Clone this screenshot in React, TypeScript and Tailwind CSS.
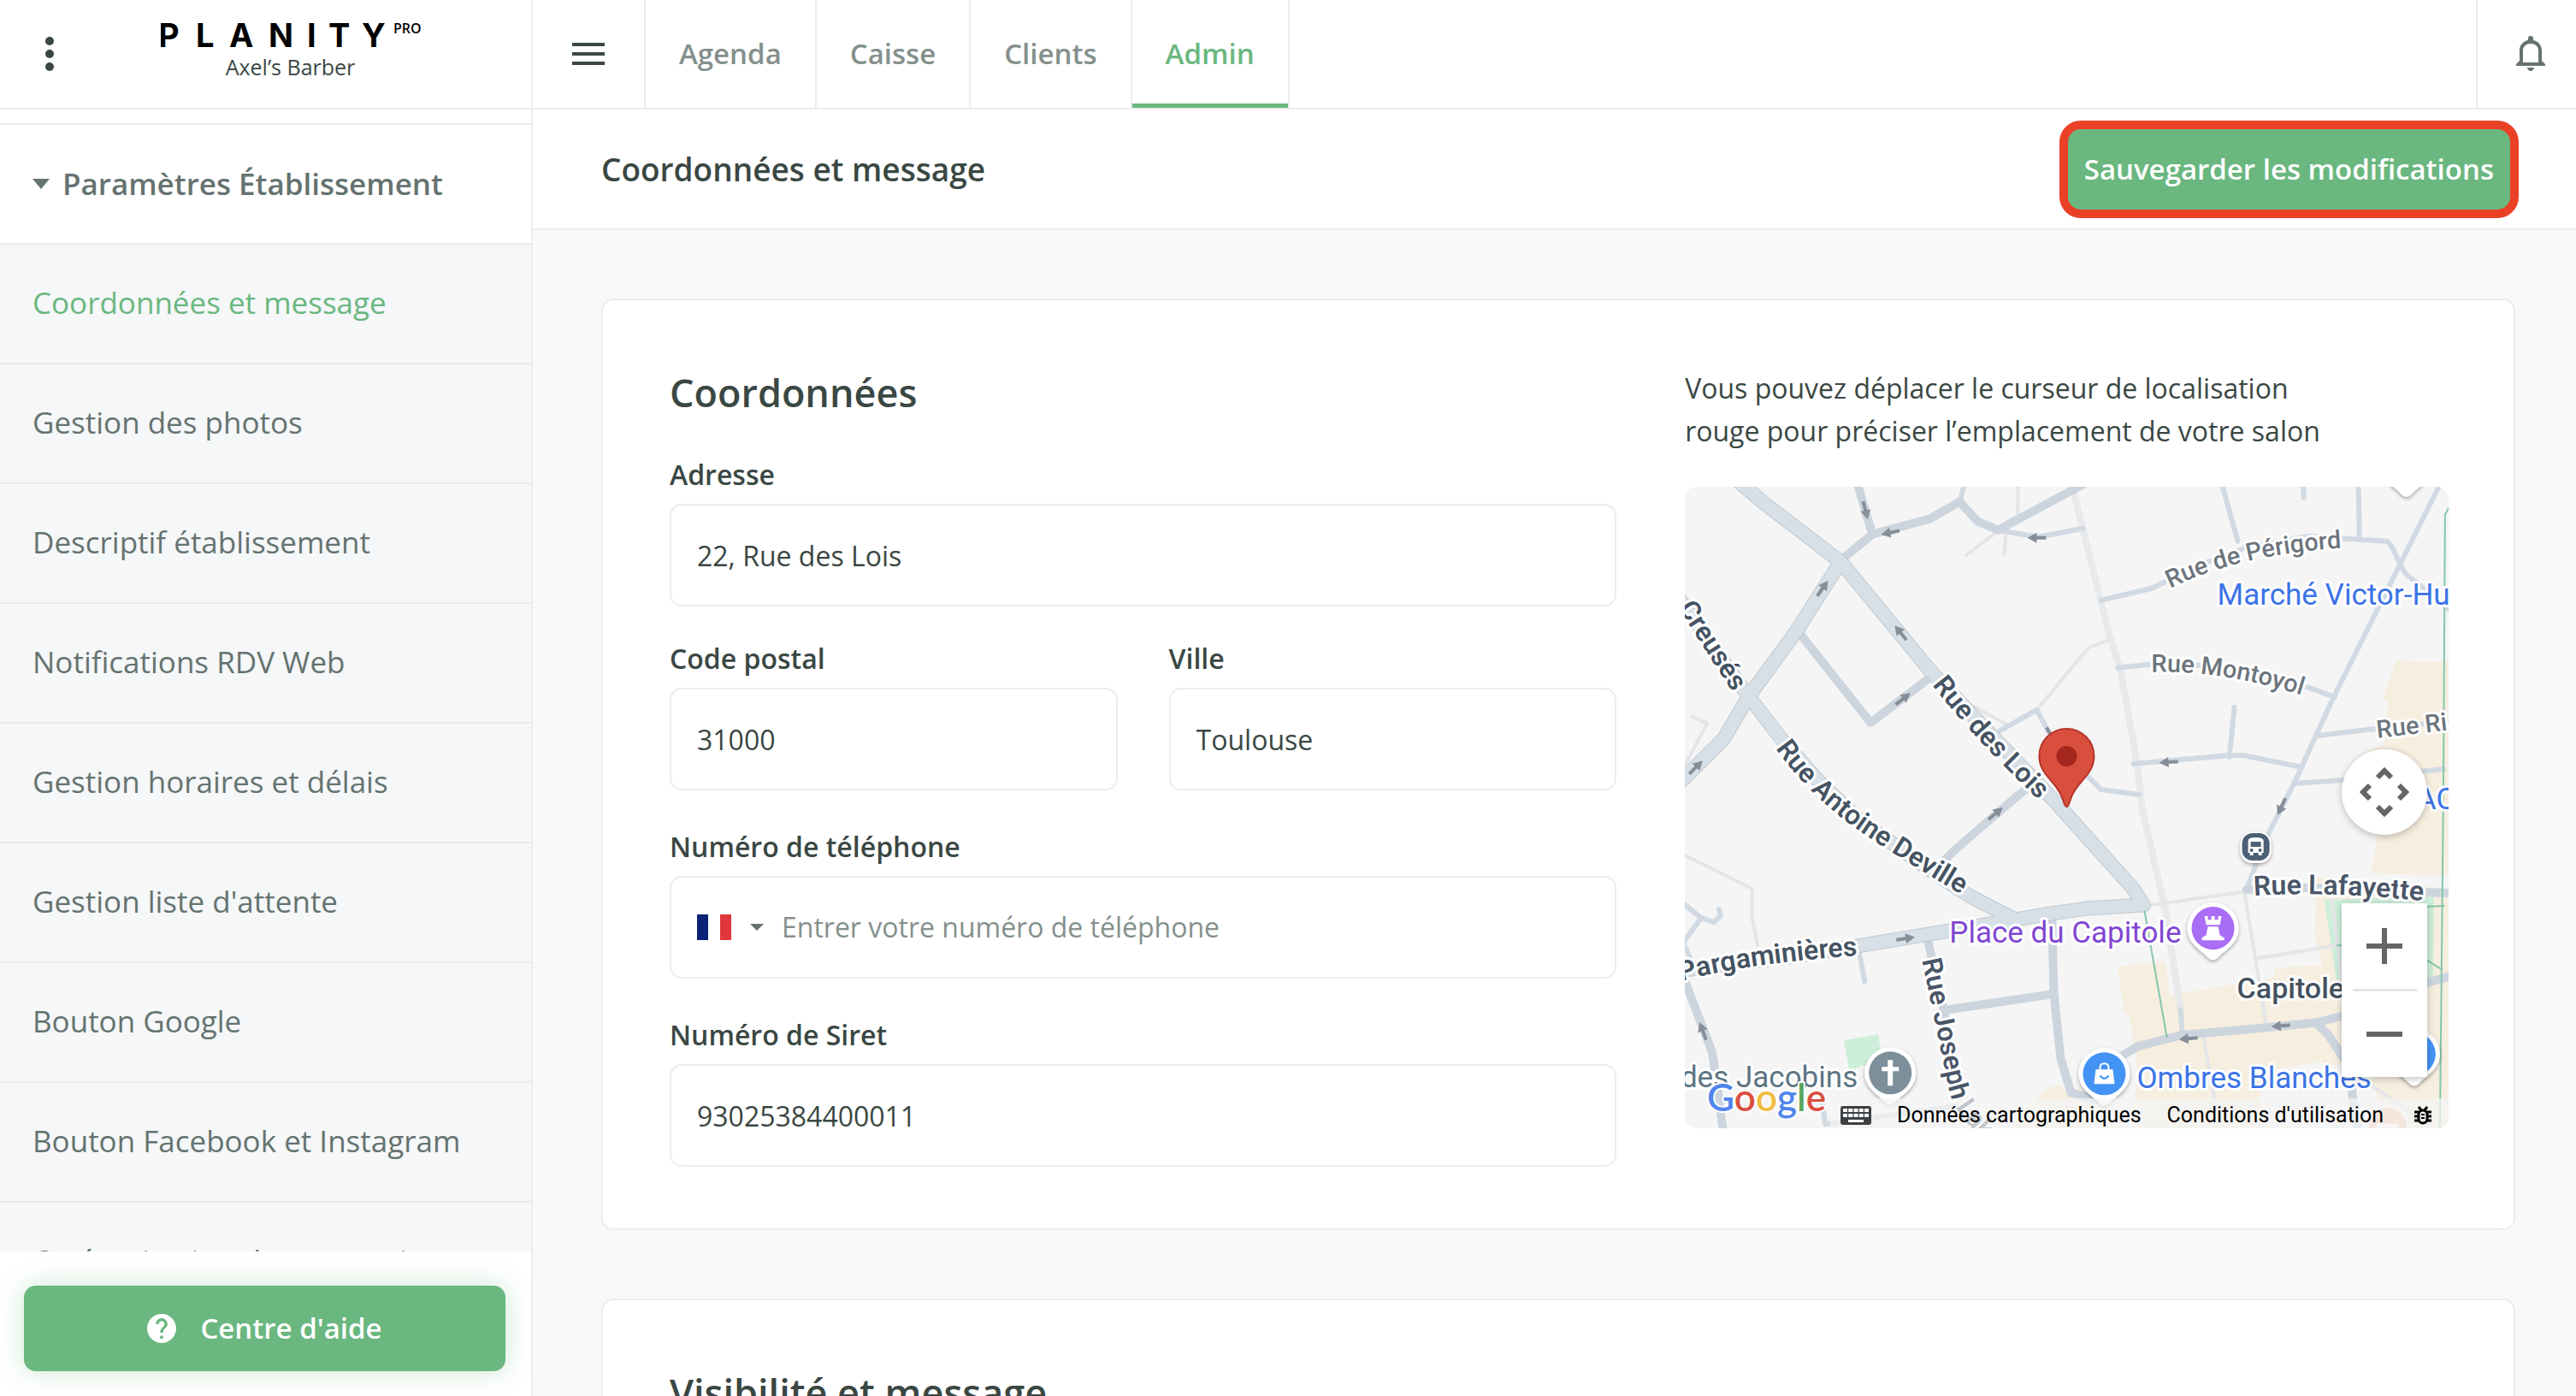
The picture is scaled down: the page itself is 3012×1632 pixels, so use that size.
import { useState } from "react";
import { twMerge } from "tailwind-merge";

// --- PROPS ---
type FieldProps = {
  id: string;
  label: string;
  value: string;
  onChange: (value: string) => void;
  className?: string;
};

type PoiProps = {
  x: number;
  y: number;
  color: string;
  children?: React.ReactNode;
};

// --- DATA ---
const TABS = ["Agenda", "Caisse", "Clients", "Admin"];

const MENU = [
  "Coordonnées et message",
  "Gestion des photos",
  "Descriptif établissement",
  "Notifications RDV Web",
  "Gestion horaires et délais",
  "Gestion liste d'attente",
  "Bouton Google",
  "Bouton Facebook et Instagram",
  "Catégorisation des prestations",
];

const MAJOR_ROADS = [
  "M60 -8 L92 19 L182 88 L289 218 L436 372 L524 470 L536 489 L469 493 L426 499 L386 506 L206 536 L136 548 L-10 566",
  "M-20 112 L69 238 L92 268 L112 294 L156 344 L202 388 L286 448 L332 478 L386 506",
  "M182 88 L129 171 L74 246 L46 294 L-10 350",
];

const ROADS = [
  "M201 -5 L219 56 L184 85",
  "M219 56 L286 38 L321 18 L342 41 L366 51 L470 -5",
  "M132 169 L217 276 L288 222",
  "M412 344 L389 361 L316 424 L294 446",
  "M-2 572 L32 661 L37 694 L45 755",
  "M284 531 L302 610 L318 690",
  "M302 612 L429 593",
  "M429 508 L431 591 L439 668 L451 708 L480 716",
  "M509 666 L529 654 L579 641 L669 633 L739 626 L769 618 L869 579 L895 572",
  "M739 628 L752 641 L776 678 L782 728 L788 755",
  "M656 471 L700 468 L895 475",
];

const LANES = [
  "M366 51 L412 59 L429 56 L465 49",
  "M321 18 L327 -4",
  "M367 286 L411 261 L431 298 L471 339 L486 354 L531 360",
  "M-2 487 L19 504 L34 509 L42 501 L40 494",
  "M19 504 L-2 533 L6 550",
  "M204 545 L210 578",
  "M883 -4 L757 248 L712 346 L679 411 L656 471",
  "M627 -4 L646 64",
  "M722 -4 L723 13",
  "M787 3 L788 61",
  "M486 133 L546 119 L562 111 L612 88 L656 71 L729 58 L771 61 L821 64 L826 71 L841 101 L895 146",
  "M506 212 L542 208 L602 209 L729 235 L759 246",
  "M524 324 L636 314 L652 314 L721 328",
  "M642 258 L636 316",
  "M712 347 L769 343 L886 330",
  "M739 291 L806 283 L895 274",
  "M579 611 L581 638",
  "M160 715 L164 745 L330 722",
];

const FOOTPATHS = [
  "M389 -2 V34",
  "M361 56 L329 80",
  "M375 58 L373 80",
  "M494 180 L472 188 L411 261",
  "M376 278 L336 256",
  "M9 269 L26 277 L0 326",
  "M-2 430 L79 470 L78 501 L85 536",
  "M544 489 L656 473",
  "M654 476 L679 628",
  "M669 551 L762 536",
  "M756 483 L767 574",
  "M606 644 L621 728",
  "M804 701 L870 745",
];

const GREENWAYS = [
  "M893 24 L888 33 L886 364 L884 561 L882 752",
  "M537 496 L563 643",
  "M866 553 L884 564",
  "M866 491 L887 490",
  "M762 536 H770",
];

const BUILT_AREAS = [
  "831,204 886,205 892,205 892,470 737,456 736,528 746,559 689,562 688,574 567,594 561,554 505,561 514,616 519,616 529,681 522,750 672,750 672,684 740,672 742,668 746,676 776,676 800,690 812,720 822,750 892,750 892,455 811,452 802,451 809,411 801,306 817,303 820,264 822,250 815,249",
  "420,706 436,698 450,712 462,700 480,720 470,750 376,750",
];

// x, y, heading in degrees
const ARROWS = [
  [211, 28, 76],
  [240, 54, 168],
  [411, 60, 180],
  [161, 119, -55],
  [252, 171, -129],
  [255, 248, -38],
  [13, 328, -45],
  [428, 291, 60],
  [565, 322, 176],
  [697, 374, 115],
  [258, 528, -8],
  [363, 382, -40],
  [21, 636, -110],
  [588, 645, 175],
  [696, 630, 175],
];

const MAIN_STREET_LABELS = [
  { id: "creuses", d: "M-8 142 L66 256", text: "Creusés", color: "#455362" },
  { id: "lois", d: "M289 232 Q345 305 450 400", text: "Rue des Lois", color: "#455362" },
  {
    id: "deville",
    d: "M106 306 Q150 368 218 412 T370 504",
    text: "Rue Antoine Deville",
    color: "#455362",
  },
  { id: "parga", d: "M-4 578 Q70 556 240 545", text: "Pargaminières", color: "#455362" },
  {
    id: "joseph",
    d: "M277 553 L309 706 Q316 740 380 790",
    text: "Rue Joseph Lakanal",
    color: "#4a5668",
  },
  { id: "lafayette", d: "M665 478 Q760 472 890 487", text: "Rue Lafayette", color: "#4a5668" },
];

const STREET_LABELS = [
  { id: "perigord", d: "M567 119 Q660 74 795 71", text: "Rue de Périgord", color: "#6c757d" },
  { id: "montoyol", d: "M545 217 Q640 214 750 254", text: "Rue Montoyol", color: "#6c757d" },
  { id: "rivals", d: "M809 294 L940 279", text: "Rue Ri", color: "#6c757d" },
];

const Field = (props: FieldProps) => (
  <div className={twMerge("flex flex-col gap-3", props.className)}>
    <label htmlFor={props.id} className="text-[32px] leading-11 font-semibold">
      {props.label}
    </label>
    <input
      id={props.id}
      value={props.value}
      onChange={(e) => props.onChange(e.target.value)}
      className="h-[120px] w-full rounded-[14px] border-2 border-[#ededed] px-[30px] text-[32px]"
    />
  </div>
);

const Poi = ({ x, y, color, children }: PoiProps) => (
  <g transform={`translate(${x} ${y})`}>
    <path
      d="M0 37 C-3 37 -5 35 -7 33 C-13 26 -30 18 -30 0 A30 30 0 0 1 30 0 C30 18 13 26 7 33 C5 35 3 37 0 37 Z"
      fill="#fff"
      filter="url(#poi-shadow)"
    />
    <circle r="25" fill={color} />
    {children}
  </g>
);

const MapCanvas = () => (
  <svg
    viewBox="0 0 892 750"
    preserveAspectRatio="xMidYMid slice"
    className="block size-full"
    style={{ fontFamily: "Roboto, sans-serif" }}
    role="img"
    aria-label="Plan du quartier"
  >
    <defs>
      <filter id="poi-shadow" x="-30%" y="-30%" width="160%" height="170%">
        <feDropShadow dx="0" dy="2" stdDeviation="2" floodOpacity="0.35" />
      </filter>
      {[...MAIN_STREET_LABELS, ...STREET_LABELS].map((label) => (
        <path key={label.id} id={label.id} d={label.d} />
      ))}
    </defs>
    <rect width="892" height="750" fill="#f5f5f5" />

    {BUILT_AREAS.map((points) => (
      <polygon key={points} points={points} fill="#f6eedf" />
    ))}
    <polygon points="747,483 875,479 874,574 761,576" fill="#cdeeda" />
    <polygon points="186,647 226,640 230,668 192,683" fill="#cdeeda" />

    <g fill="none" strokeLinejoin="round" strokeLinecap="round">
      <path
        d="M454 6 L496 174 L509 214 L529 328 L534 375 L562 498 L579 611"
        stroke="#e8e9eb"
        strokeWidth="8"
        strokeLinecap="butt"
      />
      <g stroke="#e4e5e8" strokeWidth="4">
        {FOOTPATHS.map((d) => (
          <path key={d} d={d} />
        ))}
      </g>
      <g stroke="#d1dae3" strokeWidth="6">
        {LANES.map((d) => (
          <path key={d} d={d} />
        ))}
      </g>
      <g stroke="#ccd5de" strokeWidth="10">
        {ROADS.map((d) => (
          <path key={d} d={d} />
        ))}
      </g>
      <g stroke="#bfc9d1" strokeWidth="17">
        {MAJOR_ROADS.map((d) => (
          <path key={d} d={d} />
        ))}
      </g>
      <g stroke="#d8e0e7" strokeWidth="15">
        {MAJOR_ROADS.map((d) => (
          <path key={d} d={d} />
        ))}
      </g>
      <g stroke="#84c6ab" strokeWidth="2">
        {GREENWAYS.map((d) => (
          <path key={d} d={d} />
        ))}
      </g>
    </g>

    {ARROWS.map(([x, y, angle]) => (
      <path
        key={`${x}-${y}`}
        d="M-11 -2 H0 V-6 L11 0 L0 6 V2 H-11 Z"
        fill="#858e99"
        transform={`translate(${x} ${y}) rotate(${angle})`}
      />
    ))}

    <g strokeLinejoin="round" stroke="#fff" strokeWidth="6" style={{ paintOrder: "stroke" }}>
      <g fontSize="32" fontWeight="600">
        {MAIN_STREET_LABELS.map((label) => (
          <text key={label.id} fill={label.color}>
            <textPath href={`#${label.id}`}>{label.text}</textPath>
          </text>
        ))}
      </g>
      <g fontSize="29" fontWeight="500">
        {STREET_LABELS.map((label) => (
          <text key={label.id} fill={label.color}>
            <textPath href={`#${label.id}`}>{label.text}</textPath>
          </text>
        ))}
      </g>
      <g fontSize="35">
        <text x="622" y="138" fill="#3b73e6">
          Marché Victor-Hugo
        </text>
        <text x="855" y="377" fill="#3b73e6">
          AC
        </text>
        <text x="309" y="533" fill="#8046d1">
          Place du Capitole
        </text>
        <text x="528" y="703" fill="#3b73e6">
          Ombres Blanches
        </text>
        <text x="202" y="702" fill="#5d7482" textAnchor="end">
          des Jacobins
        </text>
      </g>
      <text x="645" y="598" fontSize="34" fontWeight="500" fill="#44525f">
        Capitole
      </text>
    </g>

    {/* bus stop */}
    <g transform="translate(667 421)">
      <rect x="-18" y="-18" width="36" height="37" rx="14" fill="#fff" filter="url(#poi-shadow)" />
      <rect x="-16" y="-16" width="32" height="32" rx="12" fill="#4d6075" />
      <path
        d="M-9 -7 Q-9 -11 0 -11 Q9 -11 9 -7 V7 H7 V10 H3 V7 H-3 V10 H-7 V7 H-9 Z"
        fill="#fff"
      />
      <rect x="-6" y="-6" width="12" height="6" fill="#4d6075" />
      <circle cx="-5" cy="4" r="2" fill="#4d6075" />
      <circle cx="5" cy="4" r="2" fill="#4d6075" />
    </g>

    <Poi x={843} y={-25} color="#4393f5" />
    <Poi x={852} y={663} color="#4393f5" />
    <Poi x={240} y={685} color="#7c8f9b">
      <path d="M-3 -15 H3 V-7 H10 V-2 H3 V15 H-3 V-2 H-10 V-7 H-3 Z" fill="#fff" />
    </Poi>
    <Poi x={617} y={516} color="#a96ef5">
      <path
        d="M-10 -14 H-6 V-10 H-2 V-14 H2 V-10 H6 V-14 H10 L8 -4 H-8 Z M-6 -2 H6 L8 8 L13 11 V14 H-13 V11 L-8 8 Z"
        fill="#fff"
      />
    </Poi>
    <Poi x={490} y={686} color="#4393f5">
      <path d="M-10 -5 H10 L12 12 H-12 Z" fill="#fff" />
      <path d="M-5 -4 V-7 Q-5 -12 0 -12 Q5 -12 5 -7 V-4" fill="none" stroke="#fff" strokeWidth="2" />
      <path d="M-5 2 Q0 9 5 2" fill="none" stroke="#4393f5" strokeWidth="2" />
    </Poi>

    {/* draggable salon marker */}
    <path
      d="M446 374 C444 374 443 370 442 367 C436 345 414 338 414 315 A32 32 0 0 1 478 315 C478 338 456 345 450 367 C449 370 448 374 446 374 Z"
      fill="#d94f3e"
      stroke="#b8332a"
      strokeWidth="2"
    />
    <circle cx="446" cy="315" r="12" fill="#a4261d" />

    <g opacity="0.45">
      <circle cx="821" cy="748" r="24" fill="#f08a50" stroke="#fff" strokeWidth="4" />
      <rect x="808" y="744" width="26" height="8" fill="#fff" />
    </g>
  </svg>
);

const GoogleLogo = () => (
  <svg viewBox="0 0 146 52" className="h-[52px] w-[146px]" aria-label="Google">
    <text
      x="2"
      y="38"
      fontSize="44"
      fontWeight="600"
      stroke="#fff"
      strokeWidth="4"
      strokeLinejoin="round"
      style={{ fontFamily: "Lato, sans-serif", paintOrder: "stroke" }}
    >
      <tspan fill="#5086ec">G</tspan>
      <tspan fill="#d9503f">o</tspan>
      <tspan fill="#f1bd42">o</tspan>
      <tspan fill="#5086ec">g</tspan>
      <tspan fill="#58a65c">l</tspan>
      <tspan fill="#d9503f">e</tspan>
    </text>
  </svg>
);

const MapView = () => (
  <div className="relative h-[750px] overflow-hidden rounded-[14px] font-[Roboto,sans-serif]">
    <MapCanvas />

    <div className="absolute right-[25px] bottom-[60px] flex flex-col gap-20 text-[#666]">
      <button
        type="button"
        aria-label="Déplacer la carte"
        className="flex size-[100px] items-center justify-center rounded-full bg-white shadow-[0_2px_8px_rgba(0,0,0,0.25)]"
      >
        <svg viewBox="0 0 60 60" className="size-[60px]" fill="none" stroke="currentColor" strokeWidth="6">
          <path d="M22 13 L30 5 L38 13 M22 47 L30 55 L38 47 M13 22 L5 30 L13 38 M47 22 L55 30 L47 38" />
        </svg>
      </button>
      <div className="flex flex-col items-center bg-white shadow-[0_2px_8px_rgba(0,0,0,0.25)]">
        <button type="button" aria-label="Zoom avant" className="flex size-[100px] items-center justify-center">
          <svg viewBox="0 0 42 42" className="size-[42px]" stroke="currentColor" strokeWidth="6">
            <path d="M0 21 H42 M21 0 V42" />
          </svg>
        </button>
        <div className="h-[3px] w-[75px] bg-[#e6e6e6]" />
        <button type="button" aria-label="Zoom arrière" className="flex size-[100px] items-center justify-center">
          <svg viewBox="0 0 42 42" className="size-[42px]" stroke="currentColor" strokeWidth="6">
            <path d="M0 21 H42" />
          </svg>
        </button>
      </div>
    </div>

    <a href="#google" className="absolute bottom-[6px] left-6">
      <GoogleLogo />
    </a>

    <div className="absolute right-0 bottom-0 flex h-[35px] items-center bg-[#f5f5f5]/70 pt-1 pr-5 pl-3 text-[25px] text-black">
      <button type="button" aria-label="Raccourcis clavier" className="mr-[30px]">
        <svg viewBox="0 0 36 22" className="h-[22px] w-9">
          <rect width="36" height="22" rx="3" fill="#3c4043" />
          <path
            d="M3 5 H33 M3 11 H33"
            stroke="#fff"
            strokeWidth="4"
            strokeDasharray="5 1.25"
          />
          <rect x="9" y="16" width="18" height="3" fill="#fff" />
        </svg>
      </button>
      <button type="button" className="mr-[30px]">
        Données cartographiques
      </button>
      <a href="#conditions" className="mr-9">
        Conditions d'utilisation
      </a>
      <button type="button" aria-label="Signaler une erreur cartographique">
        <svg viewBox="0 0 20 22" className="h-[22px] w-5" fill="none" stroke="currentColor" strokeWidth="3">
          <path d="M5 1 L8 5 M15 1 L12 5 M0 7 H5 M0 12 H5 M0 17 H5 M15 7 H20 M15 12 H20 M15 17 H20" />
          <path d="M8 10 H12 M8 14 H12" strokeWidth="2" />
          <rect x="5" y="5" width="10" height="15" rx="5" />
        </svg>
      </button>
    </div>
  </div>
);

const Sidebar = () => (
  <aside className="flex w-[623px] shrink-0 flex-col border-r-2 border-[#ededed] bg-white">
    <div className="flex h-32 shrink-0 items-center border-b-2 border-[#ededed]">
      <button type="button" aria-label="Plus d'options" className="flex w-[116px] justify-center">
        <svg viewBox="0 0 10 40" className="h-10 w-[10px]" fill="#3a4743">
          <circle cx="5" cy="5" r="5" />
          <circle cx="5" cy="20" r="5" />
          <circle cx="5" cy="35" r="5" />
        </svg>
      </button>
      <div className="flex flex-1 flex-col items-center pr-[58px] pb-3">
        <svg viewBox="0 0 304 40" className="h-10 w-[304px]" aria-label="Planity Pro">
          <text
            x="-3 41 80 126 171 196 235"
            y="35"
            fontSize="38"
            fontWeight="700"
            style={{ fontFamily: "Inter, sans-serif" }}
          >
            PLANITY
          </text>
          <text x="272" y="19" fontSize="16" fontWeight="600" style={{ fontFamily: '"Open Sans", sans-serif' }}>
            PRO
          </text>
        </svg>
        <p className="mt-0.5 text-[25px] leading-8">Axel’s Barber</p>
      </div>
    </div>

    <nav className="min-h-0 flex-1 overflow-hidden pt-4 text-[#65736f]">
      <button
        type="button"
        className="flex h-[140px] w-full items-center gap-[15px] border-t-2 border-[#e9eaeb] pl-[38px] text-[35px] font-semibold"
      >
        <svg viewBox="0 0 20 12" className="h-3 w-5" fill="currentColor">
          <path d="M0 0 H20 L10 12 Z" />
        </svg>
        Paramètres Établissement
      </button>
      <ul className="bg-[#f5f7f9]">
        {MENU.map((item, i) => (
          <li key={item} className="border-t-2 border-[#e9eaeb]">
            <a
              href="#menu"
              className={twMerge(
                "flex h-[138px] items-center px-[38px] pb-0.5 text-[35px]",
                i === 0 && "text-[#6ab77f]"
              )}
            >
              {item}
            </a>
          </li>
        ))}
      </ul>
    </nav>

    <div className="shrink-0 pt-10 pr-[30px] pb-[29px] pl-7">
      <button
        type="button"
        className="flex h-[100px] w-full items-center justify-center gap-7 rounded-[14px] bg-[#6ab77f] text-[33px] font-semibold text-white shadow-[0_0_30px_rgba(106,183,127,0.35)]"
      >
        <svg viewBox="2 2 20 20" className="size-[34px]" fill="currentColor">
          <path d="M12 2C6.48 2 2 6.48 2 12s4.48 10 10 10 10-4.48 10-10S17.52 2 12 2zm1 17h-2v-2h2v2zm2.07-7.75l-.9.92C13.45 12.9 13 13.5 13 15h-2v-.5c0-1.1.45-2.1 1.17-2.83l1.24-1.26c.37-.36.59-.86.59-1.41 0-1.1-.9-2-2-2s-2 .9-2 2H8c0-2.21 1.79-4 4-4s4 1.79 4 4c0 .88-.36 1.68-.93 2.25z" />
        </svg>
        Centre d'aide
      </button>
    </div>
  </aside>
);

const TopBar = () => (
  <header className="flex h-32 shrink-0 border-b-2 border-[#ededed] bg-white">
    <button
      type="button"
      aria-label="Menu"
      className="flex w-[132px] items-center justify-center border-r-2 border-[#ededed]"
    >
      <svg viewBox="0 0 38 26" className="h-[26px] w-[38px]" stroke="#3a4743" strokeWidth="4">
        <path d="M0 2 H38 M0 13 H38 M0 24 H38" />
      </svg>
    </button>
    <nav className="flex">
      {TABS.map((tab) => (
        <a
          key={tab}
          href="#tab"
          className={twMerge(
            "flex items-center border-r-2 border-[#ededed] px-[39px] text-[33px] font-semibold text-[#85908c]",
            tab === "Admin" && "text-[#6ab77f] shadow-[inset_0_-5px_0_#6ab77f]"
          )}
        >
          {tab}
        </a>
      ))}
    </nav>
    <button
      type="button"
      aria-label="Notifications"
      className="ml-auto flex w-[117px] items-center justify-center border-l-2 border-[#ededed] pl-2"
    >
      <svg viewBox="0 0 34 42" className="h-[42px] w-[34px]" fill="#65736f">
        <path
          fillRule="evenodd"
          d="M17 0 C19 0 20 1 20 3 V5 C26 6 30 11 30 17 V29 L34 33 V35 H0 V33 L4 29 V17 C4 11 8 6 14 5 V3 C14 1 15 0 17 0 Z M8 31 H26 V17 C26 12 22 9 17 9 C12 9 8 12 8 17 Z"
        />
        <path d="M13 37 H21 C21 39 19 41 17 41 C15 41 13 39 13 37 Z" />
      </svg>
    </button>
  </header>
);

const App = () => {
  const [form, setForm] = useState({
    address: "22, Rue des Lois",
    zip: "31000",
    city: "Toulouse",
    phone: "",
    siret: "93025384400011",
  });

  const update = (key: keyof typeof form) => (value: string) =>
    setForm((prev) => ({ ...prev, [key]: value }));

  return (
    <div className="flex h-screen overflow-hidden bg-[#f9f9f9] font-['Open_Sans','Noto_Sans',sans-serif] text-[#3a4743]">
      <Sidebar />

      <div className="flex min-w-0 flex-1 flex-col">
        <TopBar />

        <div className="flex h-[141px] shrink-0 items-center justify-between border-b-2 border-[#ededed] bg-white pr-[67px] pl-20">
          <h1 className="text-[37px] font-semibold">Coordonnées et message</h1>
          <button
            type="button"
            className="h-[114px] rounded-[25px] border-10 border-[#ea4126] bg-[#6ab77f] px-[19px] text-[33px] font-semibold text-white"
          >
            Sauvegarder les modifications
          </button>
        </div>

        <main className="flex min-h-0 flex-1 flex-col gap-20 overflow-hidden pt-20 pr-[71px] pl-20">
          <section className="grid shrink-0 grid-cols-[31fr_25fr] gap-20 rounded-[14px] border-2 border-[#ededed] bg-white pt-[78px] pr-[76px] pb-[72px] pl-[78px]">
            <form>
              <h2 className="mb-11 text-[45px] leading-[60px] font-semibold">Coordonnées</h2>
              <Field id="address" label="Adresse" value={form.address} onChange={update("address")} />
              <div className="mt-[39px] grid grid-cols-2 gap-[60px]">
                <Field id="zip" label="Code postal" value={form.zip} onChange={update("zip")} />
                <Field id="city" label="Ville" value={form.city} onChange={update("city")} />
              </div>
              <div className="mt-11 flex flex-col gap-3">
                <label htmlFor="phone" className="text-[32px] leading-11 font-semibold">
                  Numéro de téléphone
                </label>
                <div className="flex h-[120px] items-center rounded-[14px] border-2 border-[#ededed] px-[30px]">
                  <button type="button" aria-label="France" className="mr-[21px] flex items-center gap-[22px]">
                    <svg viewBox="0 0 40 30" className="h-[30px] w-10">
                      <rect width="40" height="30" fill="#fff" />
                      <rect width="13" height="30" fill="#0b2377" />
                      <rect x="27" width="13" height="30" fill="#e0373a" />
                    </svg>
                    <svg viewBox="0 0 16 8" className="h-2 w-4" fill="#65736f">
                      <path d="M0 0 H16 L8 8 Z" />
                    </svg>
                  </button>
                  <input
                    id="phone"
                    type="tel"
                    placeholder="Entrer votre numéro de téléphone"
                    value={form.phone}
                    onChange={(e) => update("phone")(e.target.value)}
                    className="min-w-0 flex-1 text-[32px] placeholder:text-[#85908c]"
                  />
                </div>
              </div>
              <Field
                id="siret"
                label="Numéro de Siret"
                value={form.siret}
                onChange={update("siret")}
                className="mt-11"
              />
            </form>

            <div>
              <p className="mb-10 text-[32px] leading-[50px]">
                Vous pouvez déplacer le curseur de localisation
                <br />
                rouge pour préciser l’emplacement de votre salon
              </p>
              <MapView />
            </div>
          </section>

          <section className="shrink-0 rounded-[14px] border-2 border-[#ededed] bg-white p-[78px]">
            <h2 className="text-[45px] leading-[60px] font-semibold">Visibilité et message</h2>
          </section>
        </main>
      </div>
    </div>
  );
};

export default App;
